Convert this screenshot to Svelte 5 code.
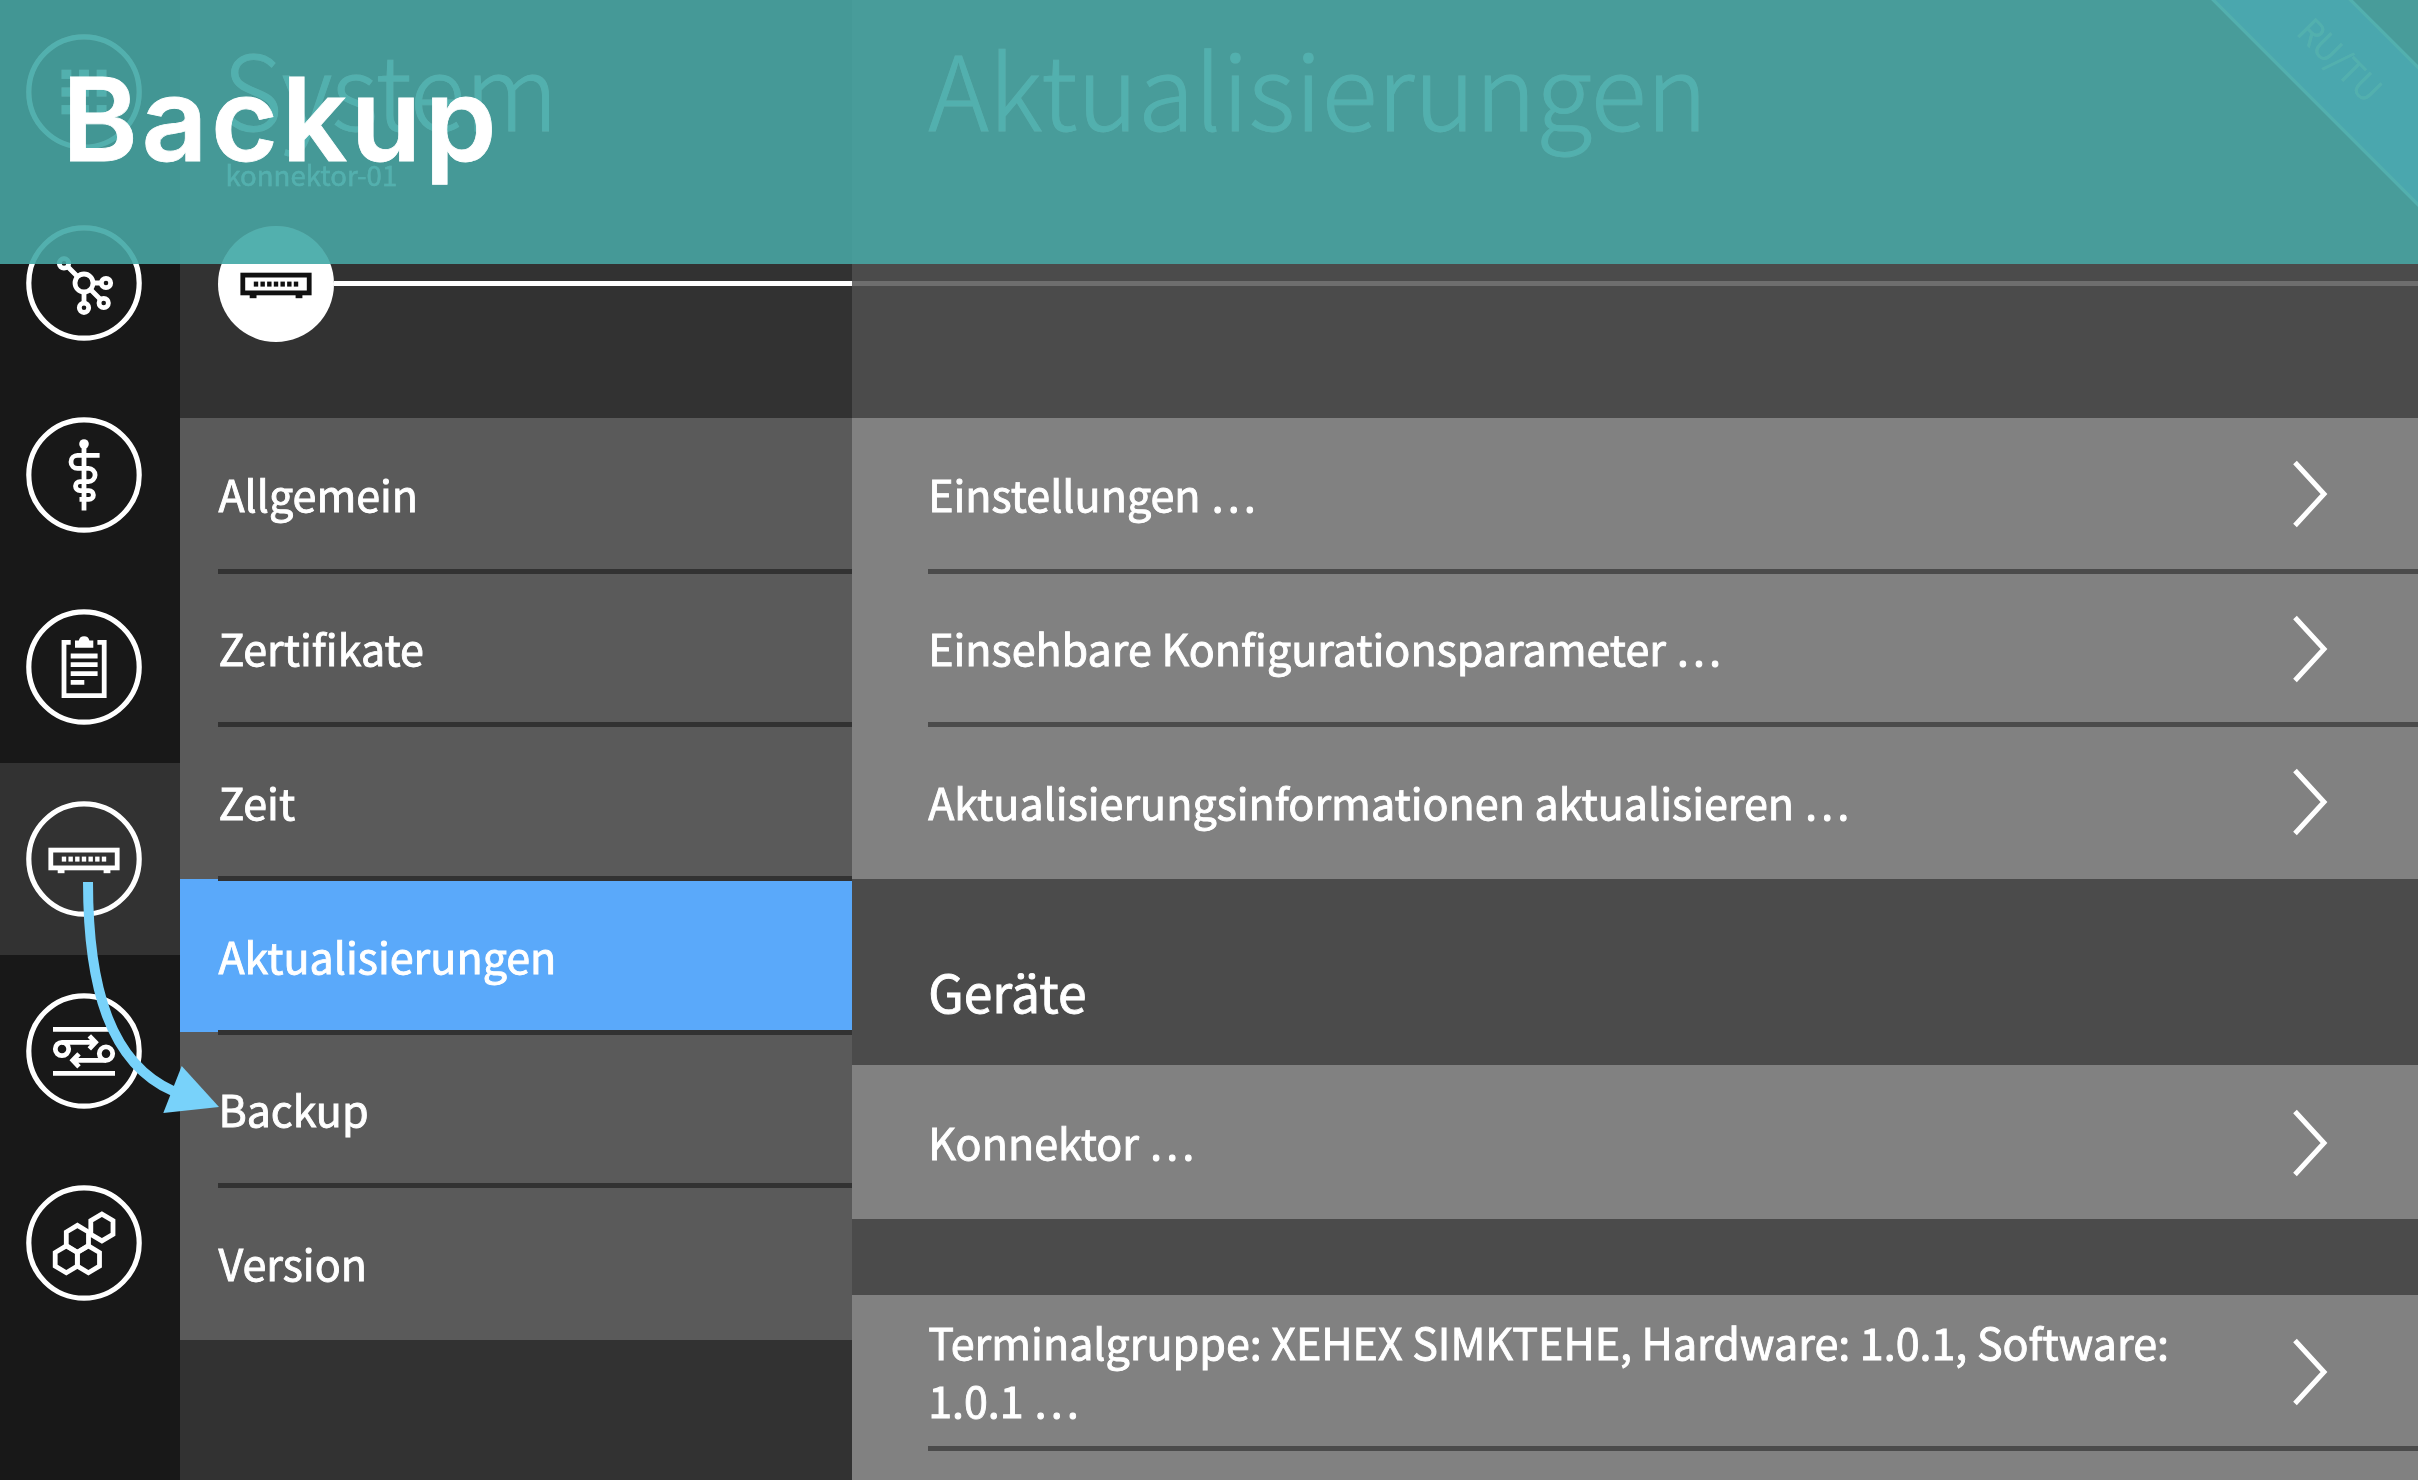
<script>
  const nav = ['grid', 'network', 'staff', 'clipboard', 'device', 'exchange', 'hexagons'];
  const menu = ['Allgemein', 'Zertifikate', 'Zeit', 'Aktualisierungen', 'Backup', 'Version'];
  const settings = [
    'Einstellungen …',
    'Einsehbare Konfigurationsparameter …',
    'Aktualisierungsinformationen aktualisieren …',
  ];
  const steps = [-1, 0, 1];
  const leds = [-3, -2, -1, 0, 1, 2, 3];
  const cells = [[17.9, -15.5], [-6.6, -4.2], [-17.7, 16.3], [4.4, 16.3]];
</script>

{#snippet device()}
  <rect class="line" x="-33.2" y="-8.9" width="66.4" height="17.8" />
  {#each leds as n}
    <rect class="solid" x={n * 6.67 - 2.2} y="-2.4" width="4.4" height="5" />
  {/each}
  <rect class="solid" x="-26.3" y="10" width="6.8" height="4.2" />
  <rect class="solid" x="19.6" y="10" width="6.8" height="4.2" />
{/snippet}

{#snippet chevron()}
  <svg class="chevron" viewBox="0 0 40 72"><path d="M5 4.5 34 36 5 67.5" /></svg>
{/snippet}

<div class="app">
  <nav class="rail">
    {#each nav as name}
      <div class="slot" class:current={name === 'device'}>
        <svg class="icon" viewBox="-60 -60 120 120">
          <circle class="ring" r="55.2" />
          {#if name === 'grid'}
            {#each steps as r}
              {#each steps as c}
                <rect class="solid" x={c * 17.6 - 4.9} y={r * 17.7 - 4.6} width="9.8" height="9.2" />
              {/each}
            {/each}
          {:else if name === 'network'}
            <path class="line" d="M-16.5-16.5-6-6M9 0H17M6 6 16.5 16.5M0 9V20" />
            <circle class="line" r="9" />
            <circle class="line" cx="-20" cy="-19.6" r="4.7" />
            <circle class="line" cx="22" cy="0" r="4.7" />
            <circle class="line" cx="19.7" cy="20" r="4.7" />
            <circle class="line" cx="0" cy="24.8" r="4.7" />
          {:else if name === 'staff'}
            <circle class="solid" cy="-31" r="4.8" />
            <path class="line" d="M0-31V35.5M15.6-19.6H-6.5A6.5 6.5 0 0 0-6.5-6.6H4.5A6.6 6.6 0 0 1 4.5 6.6H-4A4.4 4.4 0 0 0-4 15.6H5A4.4 4.4 0 0 1 5 24.4H-4.5" />
          {:else if name === 'clipboard'}
            <path class="line" d="M-13.3-24.6H-20V28.7H20.2V-24.6H13.4M-13.3-11H13.6M-13.3-2.3H13.6M-13.3 6.6H13.6M-13.3 15.3H0.3" />
            <path class="solid" d="M-9-19.3V-26.5H-5.2A5.4 5.4 0 0 1 5.4-26.5H9.3V-19.3Z" />
          {:else if name === 'device'}
            {@render device()}
          {:else if name === 'exchange'}
            <path class="line" d="M-31-21.7H31M-31 22.3H31M-22-8.7H11M22 9.3H-11M5.3-15.2 11.5-8.7 5.3-2.2M-5 2.8-11.2 9.3-5 15.8" />
            <circle class="line" cx="-22" cy="-2" r="6.7" />
            <circle class="line" cx="22" cy="2.6" r="6.7" />
          {:else}
            {#each cells as [x, y]}
              <path class="line" d="M0-13.4 11.1-6.8V6.8L0 13.4-11.1 6.8V-6.8Z" transform="translate({x} {y})" />
            {/each}
          {/if}
        </svg>
      </div>
    {/each}
  </nav>

  <section class="menu">
    <header class="head">
      <h2 class="heading system">System</h2>
      <p class="host">konnektor-01</p>
      <div class="track">
        <svg class="badge" viewBox="-58 -58 116 116">
          <circle class="disc" r="58" />
          {@render device()}
        </svg>
        <span class="bar"></span>
      </div>
    </header>
    <ul class="list">
      {#each menu as item}
        <li class="item" class:selected={item === 'Aktualisierungen'}><span>{item}</span></li>
      {/each}
    </ul>
  </section>

  <main class="content">
    <header class="head">
      <h2 class="heading">Aktualisierungen</h2>
      <div class="track"><span class="bar"></span></div>
    </header>
    <ul class="list">
      {#each settings as item}
        <li class="item"><span>{item}</span>{@render chevron()}</li>
      {/each}
    </ul>
    <h3 class="group">Geräte</h3>
    <ul class="list connector">
      <li class="item"><span>Konnektor …</span>{@render chevron()}</li>
    </ul>
    <ul class="list terminals">
      <li class="item">
        <span>Terminalgruppe: XEHEX SIMKTEHE, Hardware: 1.0.1, Software:<br />1.0.1 …</span>
        {@render chevron()}
      </li>
      <li class="item"></li>
    </ul>
  </main>

  <div class="ribbon">RU/TU</div>
  <div class="banner"><h1>Backup</h1></div>
  <svg class="pointer" viewBox="80 880 140 236">
    <path class="curve" d="M88 882C88 987 110 1063 173 1091" />
    <path class="tip" d="M181.7 1066 219 1107 163.3 1113Z" />
  </svg>
</div>

<style>
  :global(body) { background: #323232; }
  .app {
    position: relative;
    display: flex;
    width: 2418px;
    height: 1480px;
    overflow: hidden;
    color: #fff;
    font-family: "Noto Sans CJK SC", "Noto Sans", sans-serif;
    font-size: 43px;
    -webkit-text-stroke: 0.9px currentColor;
  }
  h1, h2, h3, p, ul { margin: 0; padding: 0; font-weight: 400; list-style: none; }
  svg { display: block; flex: none; }

  .rail { flex: none; width: 180.4px; height: 1485px; margin-top: -4.4px; background: #181818; }
  .slot { display: flex; align-items: center; height: 191.9px; padding-left: 24.4px; }
  .slot.current { background: #323232; }
  .icon { width: 120px; height: 120px; }
  .ring { fill: none; stroke: #fff; stroke-width: 5.2; }
  .line { fill: none; stroke: currentColor; stroke-width: 4.8; }
  .solid { fill: currentColor; }

  .menu { flex: none; width: 671.8px; background: #323232; }
  .content { flex: 1; background: #4b4b4b; }
  .head { display: flex; flex-direction: column; height: 417.5px; }
  .heading { height: 159px; padding: 13px 0 0 76px; box-sizing: border-box; line-height: 147px; font-size: 103.2px; font-weight: 300; white-space: nowrap; }
  .heading.system { padding-left: 42px; letter-spacing: -0.6px; }
  .host { height: 0; padding-left: 45px; line-height: 30px; font-size: 27.6px; -webkit-text-stroke-width: 0.4px; }
  .track { display: flex; align-items: center; height: 116px; margin-top: 66.5px; }
  .menu .track { padding-left: 38px; }
  .badge { width: 116px; height: 116px; color: #111; }
  .disc { fill: #fff; }
  .bar { flex: 1; height: 5px; background: #fff; }
  .content .bar { background: #6e6e6e; }

  .list { background: #818181; }
  .menu .list { background: #5a5a5a; }
  .item {
    position: relative;
    display: flex;
    align-items: center;
    justify-content: space-between;
    box-sizing: border-box;
    height: 153.7px;
    padding: 0 88px 2px 76px;
    line-height: 57.6px;
    white-space: nowrap;
  }
  .menu .item { padding-left: 38px; }
  .item + .item, .connector .item { padding-bottom: 0; }
  .item + .item::before {
    content: "";
    position: absolute;
    top: -2.5px;
    left: 76px;
    right: 0;
    height: 5px;
    background: #4b4b4b;
  }
  .menu .item + .item::before { left: 38px; background: #323232; }
  .item.selected { background: #5aa9fa; }
  .chevron { width: 40px; height: 72px; margin-top: 1.5px; }
  .chevron path { fill: none; stroke: #fff; stroke-width: 5; }
  .group { box-sizing: border-box; height: 186.4px; padding: 79px 0 0 76px; line-height: 66px; font-size: 51.6px; }
  .terminals { margin-top: 76.4px; }

  .ribbon {
    position: absolute;
    left: 2141px;
    top: 8.5px;
    width: 400px;
    height: 100px;
    box-sizing: border-box;
    border: solid #fff;
    border-width: 3px 0;
    background: #5aa9fa;
    font-size: 34px;
    font-weight: 300;
    line-height: 94px;
    text-align: center;
    transform: rotate(45deg);
  }
  .banner {
    position: absolute;
    inset: 0 0 auto;
    height: 264px;
    box-sizing: border-box;
    padding: 50px 0 0 62px;
    background: rgba(72, 166, 164, 0.89);
  }
  /* Caps the red channel so white content keeps a teal tint under the banner */
  .banner::before {
    content: "";
    position: absolute;
    inset: 0;
    background: #52ffff;
    mix-blend-mode: darken;
  }
  h1 { position: relative; font: 600 115px/140px Inter, sans-serif; letter-spacing: 3.6px; -webkit-text-stroke: 0.8px #fff; }
  .pointer { position: absolute; left: 80px; top: 880px; width: 140px; height: 236px; }
  .curve { fill: none; stroke: #78d2fa; stroke-width: 10; }
  .tip { fill: #78d2fa; }
</style>
